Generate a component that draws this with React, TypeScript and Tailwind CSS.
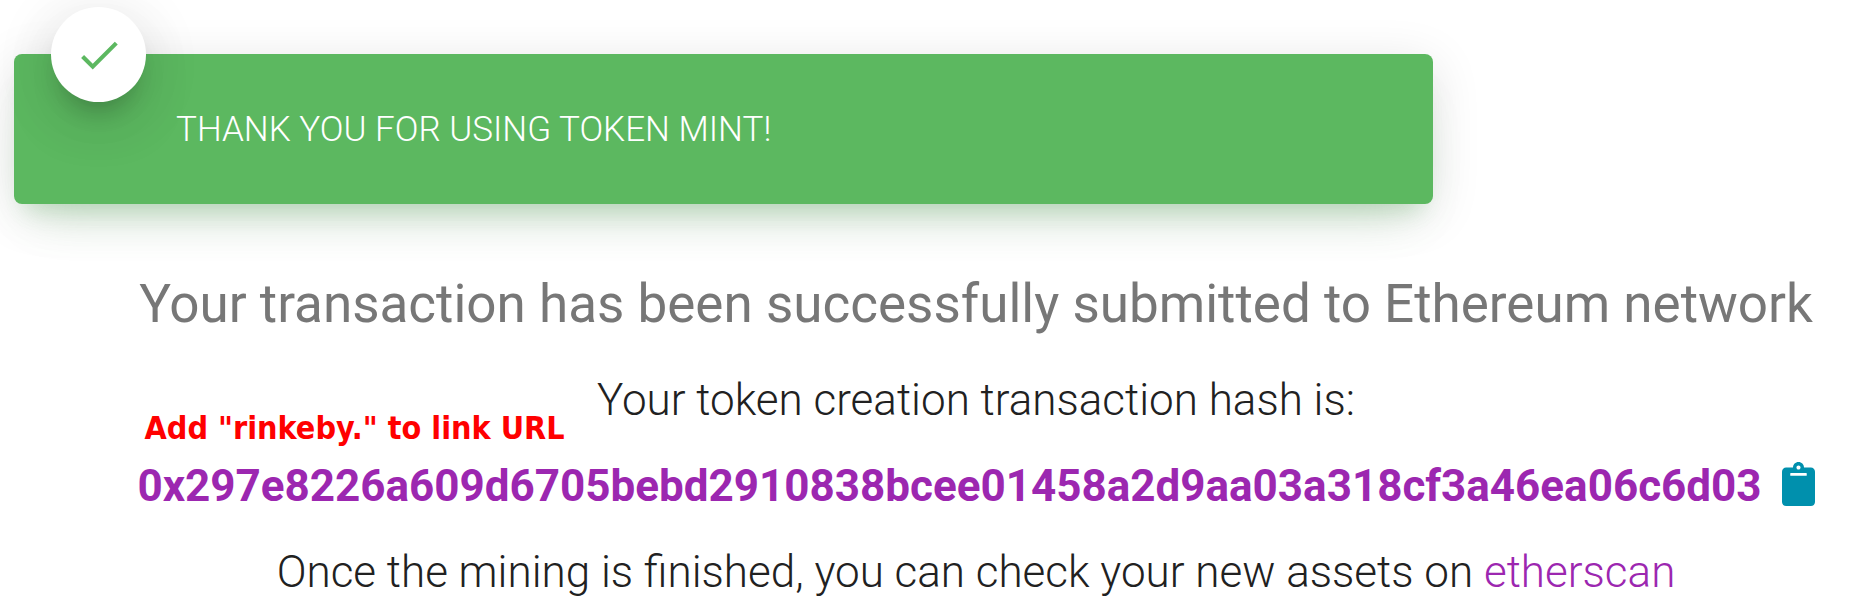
import React from "react";
import { MdCheck } from "react-icons/md";

const HASH = "0x297e8226a609d6705bebd2910838bcee01458a2d9aa03a318cf3a46ea06c6d03";

function SuccessBanner() {
  return (
    <div
      role="status"
      className="relative ml-[14px] w-[76.5%] rounded-lg bg-[#5cb860] pt-[51px] pr-10 pb-[49px] pl-[162px] shadow-[0_30px_50px_-25px_rgba(92,184,96,0.28),0_10px_50px_0_rgba(0,0,0,0.12),0_18px_20px_-12px_rgba(92,184,96,0.2)]"
    >
      <div className="absolute -top-[47px] left-[37px] flex size-[95px] items-center justify-center rounded-full bg-white text-[#5cb860] shadow-[0_25px_75px_-30px_rgba(0,0,0,0.42),0_10px_62px_0_rgba(0,0,0,0.12),0_20px_25px_-12px_rgba(0,0,0,0.2)]">
        <MdCheck size={50} aria-hidden="true" />
      </div>
      <p className="text-[35px] leading-[50px] font-light text-white">
        THANK YOU FOR USING TOKEN MINT!
      </p>
    </div>
  );
}

function ClipboardIcon() {
  return (
    <svg viewBox="0 0 384 512" className="h-11 w-[33px]" fill="currentColor" aria-hidden="true">
      <path d="M384 112v352c0 26.51-21.49 48-48 48H48c-26.51 0-48-21.49-48-48V112c0-26.51 21.49-48 48-48h80c0-35.29 28.71-64 64-64s64 28.71 64 64h80c26.51 0 48 21.49 48 48zM192 40c-13.255 0-24 10.745-24 24s10.745 24 24 24 24-10.745 24-24-10.745-24-24-24m96 114v-20a6 6 0 0 0-6-6H102a6 6 0 0 0-6 6v20a6 6 0 0 0 6 6h180a6 6 0 0 0 6-6z" />
    </svg>
  );
}

export default function App() {
  return (
    <main className="overflow-x-hidden bg-white pt-[54px] pb-2 font-[Roboto,sans-serif] text-[#212121]">
      <SuccessBanner />
      <section className="flex flex-col items-center pt-[66px] pl-[97px] text-[44px] leading-[68px] font-light whitespace-nowrap">
        <h1 className="text-[53px] leading-[68px] font-normal text-[#777777]">
          Your transaction has been successfully submitted to Ethereum network
        </h1>
        <div className="relative mt-7 flex w-[1667px] justify-center">
          <p>Your token creation transaction hash is:</p>
          <p className="absolute top-[38px] left-[2px] font-['DejaVu_Sans_Condensed','DejaVu_Sans',sans-serif] text-[32px] leading-[48px] font-bold text-[#ff0000]">
            Add "rinkeby." to link URL
          </p>
        </div>
        <div className="mt-[18px] flex items-center gap-5">
          <a href="#transaction" className="font-bold text-[#9c27b0]">
            {HASH}
          </a>
          <button type="button" aria-label="Copy transaction hash" className="pb-1 text-[#0090ad]">
            <ClipboardIcon />
          </button>
        </div>
        <p className="mt-[18px]">
          Once the mining is finished, you can check your new assets on{" "}
          <a href="#etherscan" className="text-[#9c27b0]">
            etherscan
          </a>
        </p>
      </section>
    </main>
  );
}
